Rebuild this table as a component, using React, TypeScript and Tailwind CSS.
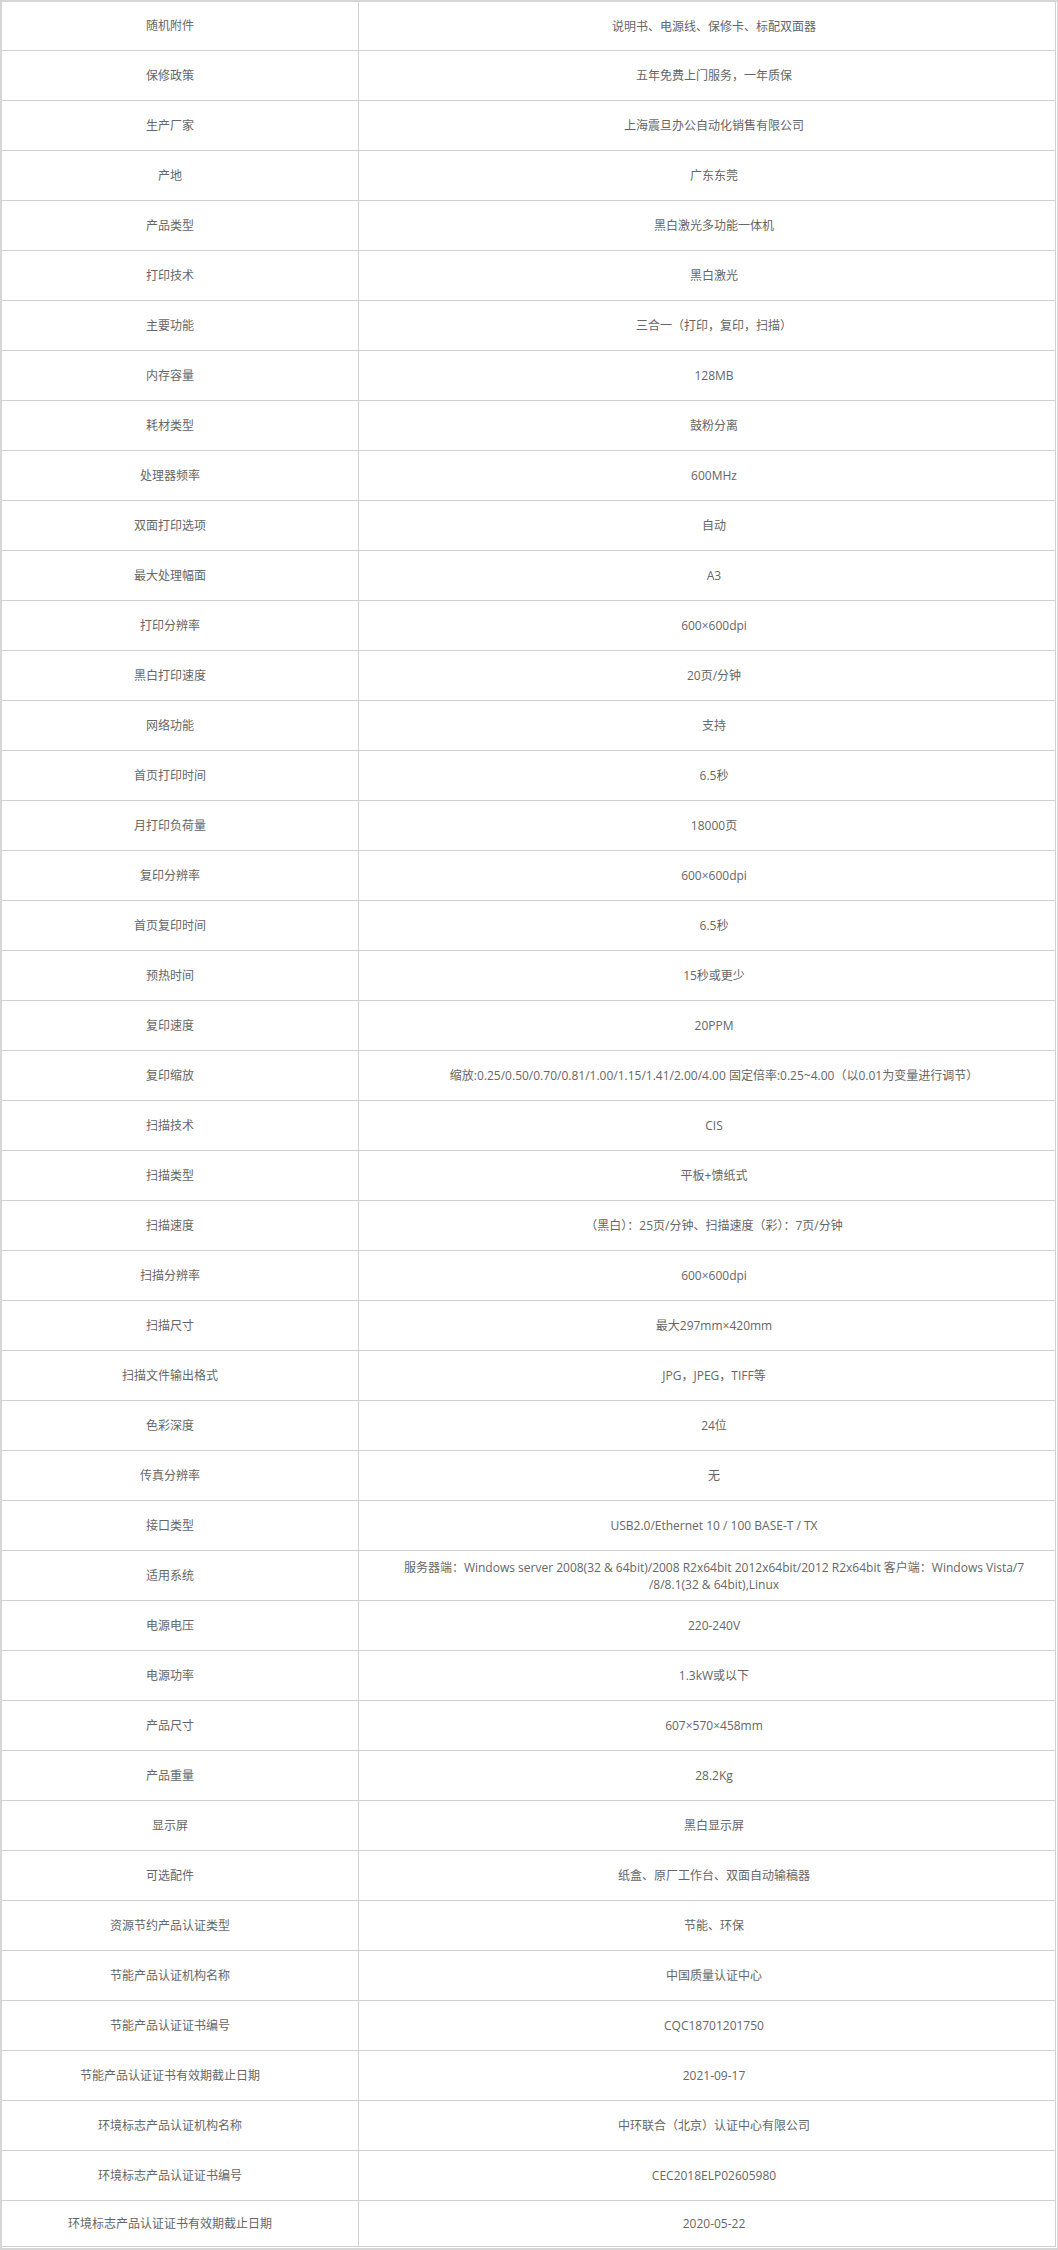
import React from 'react'

const rows: [string, React.ReactNode][] = [
  ['随机附件', '说明书、电源线、保修卡、标配双面器'],
  ['保修政策', '五年免费上门服务，一年质保'],
  ['生产厂家', '上海震旦办公自动化销售有限公司'],
  ['产地', '广东东莞'],
  ['产品类型', '黑白激光多功能一体机'],
  ['打印技术', '黑白激光'],
  ['主要功能', '三合一（打印，复印，扫描）'],
  ['内存容量', '128MB'],
  ['耗材类型', '鼓粉分离'],
  ['处理器频率', '600MHz'],
  ['双面打印选项', '自动'],
  ['最大处理幅面', 'A3'],
  ['打印分辨率', '600×600dpi'],
  ['黑白打印速度', '20页/分钟'],
  ['网络功能', '支持'],
  ['首页打印时间', '6.5秒'],
  ['月打印负荷量', '18000页'],
  ['复印分辨率', '600×600dpi'],
  ['首页复印时间', '6.5秒'],
  ['预热时间', '15秒或更少'],
  ['复印速度', '20PPM'],
  ['复印缩放', '缩放:0.25/0.50/0.70/0.81/1.00/1.15/1.41/2.00/4.00 固定倍率:0.25~4.00（以0.01为变量进行调节）'],
  ['扫描技术', 'CIS'],
  ['扫描类型', '平板+馈纸式'],
  ['扫描速度', '（黑白）：25页/分钟、扫描速度（彩）：7页/分钟'],
  ['扫描分辨率', '600×600dpi'],
  ['扫描尺寸', '最大297mm×420mm'],
  ['扫描文件输出格式', 'JPG，JPEG，TIFF等'],
  ['色彩深度', '24位'],
  ['传真分辨率', '无'],
  ['接口类型', 'USB2.0/Ethernet 10 / 100 BASE-T / TX'],
  [
    '适用系统',
    <>
      服务器端：Windows server 2008(32 &amp; 64bit)/2008 R2x64bit 2012x64bit/2012 R2x64bit 客户端：Windows Vista/7
      <br />
      /8/8.1(32 &amp; 64bit),Linux
    </>,
  ],
  ['电源电压', '220-240V'],
  ['电源功率', '1.3kW或以下'],
  ['产品尺寸', '607×570×458mm'],
  ['产品重量', '28.2Kg'],
  ['显示屏', '黑白显示屏'],
  ['可选配件', '纸盒、原厂工作台、双面自动输稿器'],
  ['资源节约产品认证类型', '节能、环保'],
  ['节能产品认证机构名称', '中国质量认证中心'],
  ['节能产品认证证书编号', 'CQC18701201750'],
  ['节能产品认证证书有效期截止日期', '2021-09-17'],
  ['环境标志产品认证机构名称', '中环联合（北京）认证中心有限公司'],
  ['环境标志产品认证证书编号', 'CEC2018ELP02605980'],
  ['环境标志产品认证证书有效期截止日期', '2020-05-22'],
]

export default function App() {
  return (
    <div className="w-[1058px] h-[2250px] bg-[#d6d6d6] pt-[2px] pl-[2px] pr-[1px] pb-[2px] font-['Open_Sans','Noto_Sans_CJK_SC',sans-serif] text-[12px] text-[#666]">
      <div className="bg-white pr-[1px] pb-[1px]">
        {rows.map(([label, value], i) => (
          <div
            key={i}
            className={
              'flex border-b border-[#d0d0d0] ' +
              (i === 0 ? 'h-[49px]' : i === rows.length - 1 ? 'h-[46px]' : 'h-[50px]')
            }
          >
            <div className="w-[357px] shrink-0 border-r border-[#d0d0d0] flex items-center justify-center pr-[20px]">
              {label}
            </div>
            <div className="w-[697px] shrink-0 border-r border-[#d0d0d0] flex items-center justify-center text-center leading-[17px] pl-[24px] pr-[10px]">
              <div>{value}</div>
            </div>
          </div>
        ))}
      </div>
    </div>
  )
}
